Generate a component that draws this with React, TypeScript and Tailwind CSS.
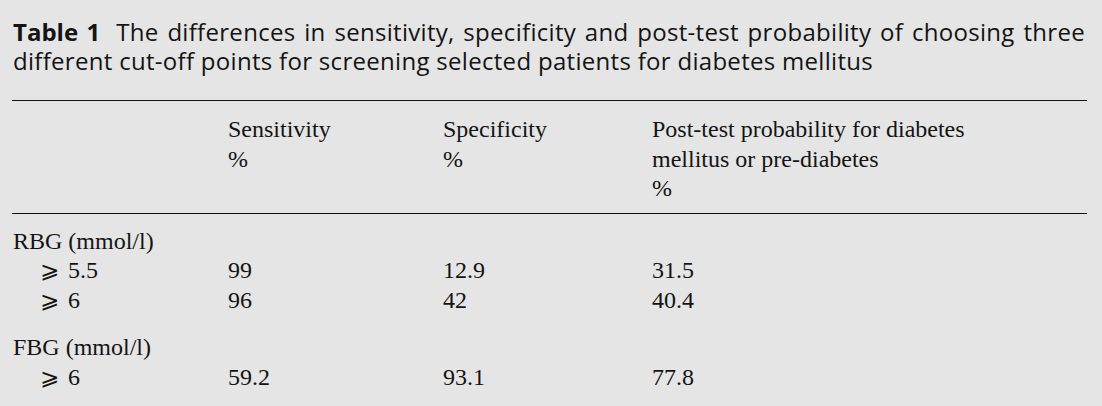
import React from "react";

const serif = "font-['Liberation_Serif','Times_New_Roman',serif]";

function Ge() {
  return (
    <span className="font-['DejaVu_Serif','DejaVu_Sans',serif] text-[23px] inline-block w-[28px]">⩾</span>
  );
}

type Row = { label: React.ReactNode; a?: string; b?: string; c?: string; indent?: boolean; extra?: string };

export default function App() {
  const rows: Row[] = [
    { label: "RBG (mmol/l)" },
    { label: "5.5", a: "99", b: "12.9", c: "31.5", indent: true },
    { label: "6", a: "96", b: "42", c: "40.4", indent: true },
    { label: "FBG (mmol/l)", extra: "mt-[18px]" },
    { label: "6", a: "59.2", b: "93.1", c: "77.8", indent: true },
  ];
  return (
    <div className="w-[1102px] h-[406px] bg-[#e5e5e5] text-[#141414] overflow-hidden">
      <div className="pl-[13px] pt-[17px] font-['Open_Sans',sans-serif] text-[24px] leading-[29px] tracking-[0.3px]">
        <div className="w-[1072px] text-justify [text-align-last:justify] whitespace-nowrap">
          <span className="font-bold mr-[16px] tracking-normal">Table 1</span>
          The differences in sensitivity, specificity and post-test probability of choosing three
        </div>
        <div className="whitespace-nowrap">
          different cut-off points for screening selected patients for diabetes mellitus
        </div>
      </div>
      <div className="mx-[12px] mt-[25px] h-px w-[1075px] bg-[#111]" />
      <div className={`${serif} text-[24px] leading-[29.5px]`}>
        <div className="grid grid-cols-[215px_215px_209px_1fr] pl-[13px] pt-[14px] pb-[9px]">
          <div />
          <div>
            Sensitivity
            <br />%
          </div>
          <div>
            Specificity
            <br />%
          </div>
          <div>
            Post-test probability for diabetes
            <br />
            mellitus or pre-diabetes
            <br />%
          </div>
        </div>
        <div className="mx-[12px] h-px w-[1075px] bg-[#111]" />
        <div className="pt-[13px]">
          {rows.map((r, i) => (
            <div key={i} className={`grid grid-cols-[215px_215px_209px_1fr] pl-[13px] ${r.extra ?? ""}`}>
              <div className={r.indent ? "pl-[27px] whitespace-nowrap" : "whitespace-nowrap"}>
                {r.indent ? <Ge /> : null}
                {r.label}
              </div>
              <div>{r.a}</div>
              <div>{r.b}</div>
              <div>{r.c}</div>
            </div>
          ))}
        </div>
      </div>
    </div>
  );
}
